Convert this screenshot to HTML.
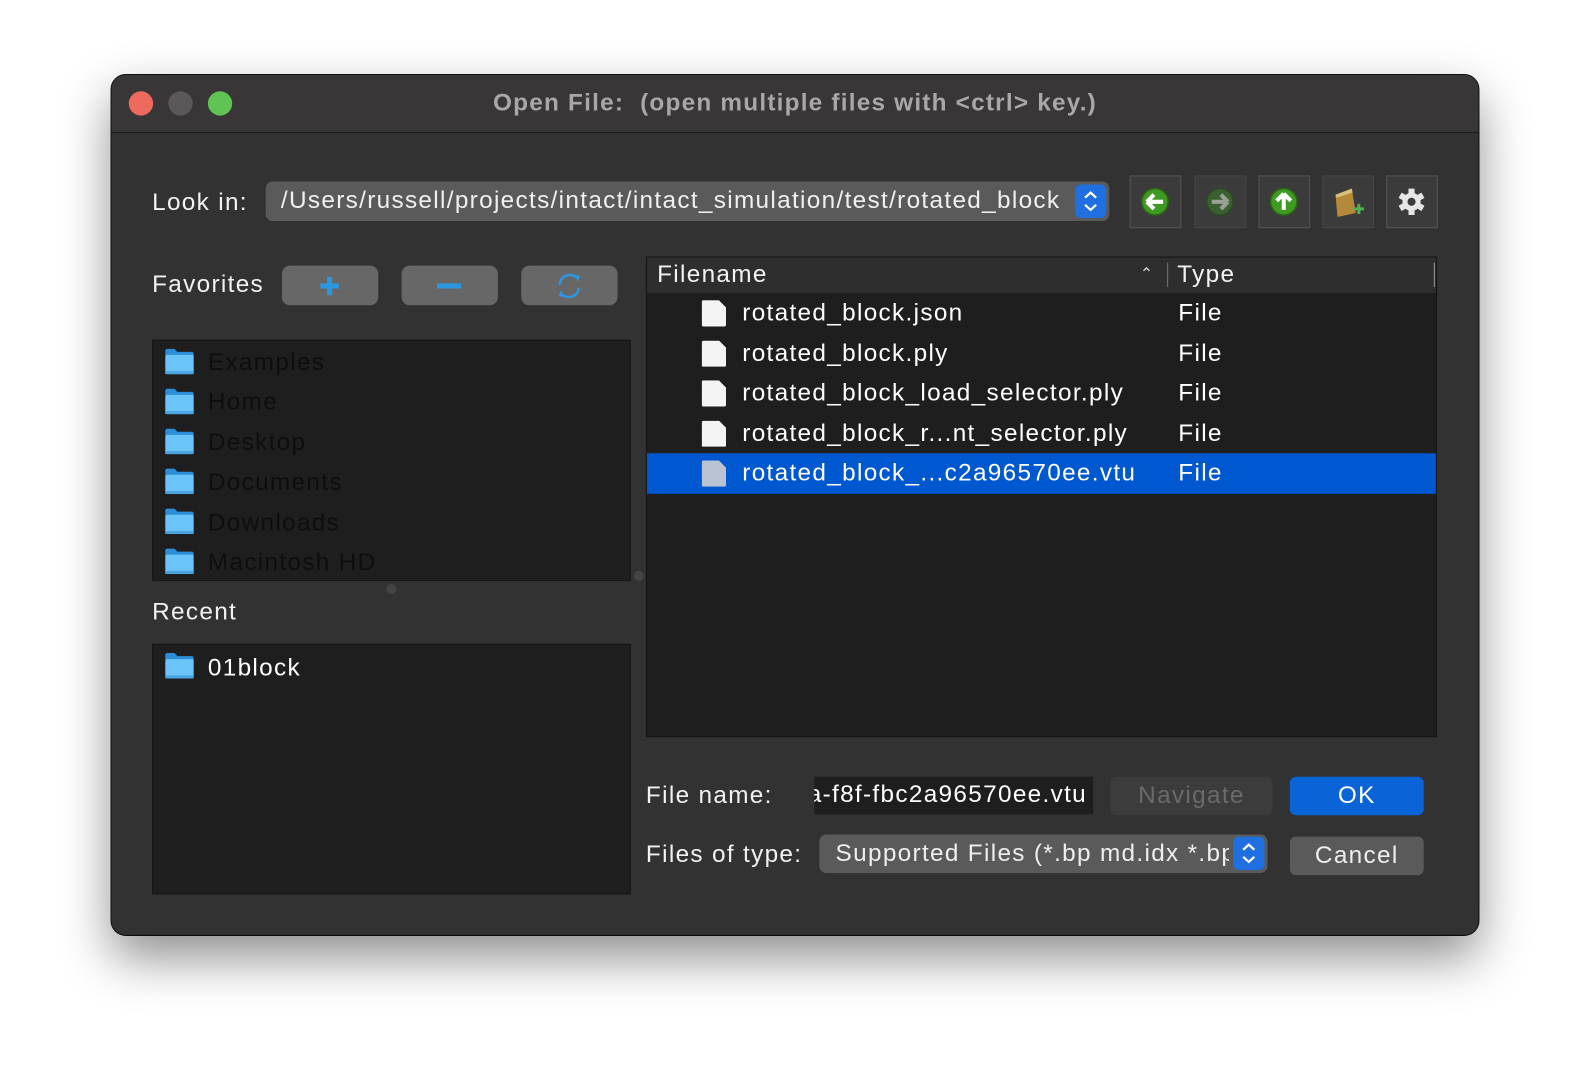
<!DOCTYPE html>
<html><head><meta charset="utf-8"><style>
*{margin:0;padding:0;box-sizing:border-box}
html,body{width:1590px;height:1084px;overflow:hidden;background:#fff}
#s{position:absolute;left:0;top:0;width:1568px;height:1069px;transform:scale(1.01403);transform-origin:0 0;font-family:"Liberation Sans",sans-serif;letter-spacing:1.3px}
.a{position:absolute}
.win{left:110px;top:74px;width:1348px;height:848px;border-radius:14px;background:#323232;box-shadow:0 22px 50px rgba(0,0,0,.45),0 0 0 1px #111;overflow:hidden}
.tb{left:0;top:0;width:1348px;height:57px;background:#383637;border-bottom:1px solid #1a1a1a}
.lbl{color:#f2f2f2;font-size:24px;line-height:28px}
.tbtn{width:51px;height:52px;background:#3b3b3b;border:1px solid #555}
.fb{width:95px;height:39px;background:#676767;border-radius:8px}
.list{background:#1e1e1e;border:1px solid #151515}
.fi{font-size:24px;line-height:39.4px;color:#0e0e0e;position:absolute;left:54px}
.row{position:absolute;left:0;width:778px;height:39.5px;font-size:24px;color:#fff;line-height:39.5px}
.row .n{position:absolute;left:94px}
.row .t{position:absolute;left:524px}
.doc{position:absolute;left:54px;top:7px;width:24px;height:26px;background:#f4f4f4;clip-path:polygon(0 0,70% 0,100% 28%,100% 100%,0 100%);border-radius:2px}
.step{position:absolute;width:31px;height:33px;background:#1f6fe0;border-radius:6px}
</style></head><body><div id="s">
<div class="a win">
 <div class="a tb"></div>
 <div class="a" style="left:17px;top:16px;width:24px;height:24px;border-radius:50%;background:#ee6a5f"></div>
 <div class="a" style="left:56px;top:16px;width:24px;height:24px;border-radius:50%;background:#5a5859"></div>
 <div class="a" style="left:95px;top:16px;width:24px;height:24px;border-radius:50%;background:#5fc452"></div>
 <div class="a" style="left:0;top:13px;width:1348px;text-align:center;font-weight:bold;font-size:24px;color:#a9a7a8;line-height:30px;letter-spacing:1.2px">Open File:&nbsp; (open multiple files with &lt;ctrl&gt; key.)</div>
</div>
<div class="a lbl" style="left:150px;top:186px">Look in:</div>
<div class="a" style="left:262px;top:179px;width:832px;height:39px;background:#5a5a5a;border-radius:7px;overflow:hidden">
 <div class="a" style="left:15px;top:5px;width:780px;white-space:nowrap;overflow:hidden;font-size:24px;color:#f0f0f0;line-height:28px">/Users/russell/projects/intact/intact_simulation/test/rotated_block</div>
 <div class="step" style="left:798px;top:3px"><svg width="31" height="33"><path d="M10 13 L15.5 8 L21 13 M10 20 L15.5 25 L21 20" stroke="#fff" stroke-width="2.2" fill="none"/></svg></div>
</div>
<div class="a tbtn" style="left:1114px;top:173px"><svg width="49" height="50"><circle cx="24" cy="25" r="13" fill="#3f9a22" stroke="#2a6a14" stroke-width="1.5"/><path d="M16 25 L23 18 M16 25 L23 32 M16 25 H32" stroke="#fff" stroke-width="4" fill="none"/></svg></div>
<div class="a tbtn" style="left:1178px;top:173px;border-color:#484848"><svg width="49" height="50"><circle cx="24" cy="25" r="13" fill="#3b6030" stroke="#2d4a24" stroke-width="1.5"/><path d="M32 25 L25 18 M32 25 L25 32 M32 25 H16" stroke="#9aa095" stroke-width="4" fill="none"/></svg></div>
<div class="a tbtn" style="left:1241px;top:173px"><svg width="49" height="50"><circle cx="24" cy="25" r="13" fill="#3f9a22" stroke="#2a6a14" stroke-width="1.5"/><path d="M24 17 L17 24 M24 17 L31 24 M24 17 V33" stroke="#fff" stroke-width="4" fill="none"/></svg></div>
<div class="a tbtn" style="left:1304px;top:173px;border-color:#484848"><svg width="49" height="50"><path d="M12 18 L28 12 L32 36 L14 40 Z" fill="#b48a3a"/><path d="M12 18 L28 12 L29 16 L13 21Z" fill="#d8c07a"/><path d="M30 32 H40 M35 27 V37" stroke="#4caf50" stroke-width="3"/></svg></div>
<div class="a tbtn" style="left:1367px;top:173px"><svg width="49" height="50"><g transform="translate(24 25)" fill="#e6e6e6"><circle r="9"/><rect x="-3" y="-13" width="6" height="26"/><rect x="-3" y="-13" width="6" height="26" transform="rotate(60)"/><rect x="-3" y="-13" width="6" height="26" transform="rotate(120)"/><circle r="4" fill="#3b3b3b"/></g></svg></div>

<div class="a lbl" style="left:150px;top:267px">Favorites</div>
<div class="a fb" style="left:278px;top:262px"><svg width="95" height="39"><path d="M47 11 V29 M38 20 H56" stroke="#2b97e0" stroke-width="5"/></svg></div>
<div class="a fb" style="left:396px;top:262px"><svg width="95" height="39"><path d="M35 20 H59" stroke="#2b97e0" stroke-width="5"/></svg></div>
<div class="a fb" style="left:514px;top:262px"><svg width="95" height="39"><path d="M38 19 A10 10 0 0 1 55 12 M57 22 A10 10 0 0 1 40 28" stroke="#2b97e0" stroke-width="2.5" fill="none"/><path d="M52 9 L58 10 L56 16Z M43 31 L37 30 L39 24Z" fill="#2b97e0"/></svg></div>

<div class="a list" style="left:150px;top:335px;width:472px;height:238px">
 <div class="fi" style="top:2px">Examples</div><div class="fi" style="top:41.4px">Home</div><div class="fi" style="top:80.8px">Desktop</div><div class="fi" style="top:120.2px">Documents</div><div class="fi" style="top:159.6px">Downloads</div><div class="fi" style="top:199px">Macintosh HD</div>
</div>
<svg class="a" style="left:162px;top:343px" width="30" height="230">
 <defs><g id="f"><path d="M1 3 Q1 1 3 1 H10 L13 4 H27 Q29 4 29 6 V8 H1Z" fill="#2c8ed6"/><rect x="1" y="7" width="28" height="19" rx="2" fill="#6ac4f8"/><rect x="1" y="23" width="28" height="3" fill="#4aa6e2"/></g></defs>
 <use href="#f" y="0"/><use href="#f" y="39.4"/><use href="#f" y="78.8"/><use href="#f" y="118.2"/><use href="#f" y="157.6"/><use href="#f" y="197"/>
</svg>
<div class="a" style="left:381px;top:576px;width:10px;height:10px;border-radius:50%;background:#444"></div>
<div class="a" style="left:625px;top:563px;width:10px;height:10px;border-radius:50%;background:#444"></div>

<div class="a lbl" style="left:150px;top:590px">Recent</div>
<div class="a list" style="left:150px;top:635px;width:472px;height:247px">
 <div class="a" style="left:54px;top:3px;font-size:24px;line-height:39px;color:#fff">01block</div>
</div>
<svg class="a" style="left:162px;top:643px" width="30" height="30"><use href="#f"/></svg>

<div class="a" style="left:637px;top:253px;width:780px;height:474px;background:#1e1e1e;border:1px solid #151515">
 <div class="a" style="left:0;top:0;width:778px;height:35px;background:#2e2e2e"></div>
 <div class="a lbl" style="left:10px;top:3px">Filename</div>
 <div class="a" style="left:486px;top:6px;color:#ddd;font-size:16px">&#8963;</div>
 <div class="a" style="left:513px;top:5px;width:1px;height:24px;background:#777"></div>
 <div class="a lbl" style="left:523px;top:3px">Type</div>
 <div class="a" style="left:776px;top:5px;width:1px;height:24px;background:#999"></div>
 <div class="row" style="top:35px"><div class="doc"></div><span class="n">rotated_block.json</span><span class="t">File</span></div>
 <div class="row" style="top:74.5px"><div class="doc"></div><span class="n">rotated_block.ply</span><span class="t">File</span></div>
 <div class="row" style="top:114px"><div class="doc"></div><span class="n">rotated_block_load_selector.ply</span><span class="t">File</span></div>
 <div class="row" style="top:153.5px"><div class="doc"></div><span class="n">rotated_block_r...nt_selector.ply</span><span class="t">File</span></div>
 <div class="row" style="top:193px;background:#0058d0"><div class="doc" style="background:#b9c3d2"></div><span class="n">rotated_block_...c2a96570ee.vtu</span><span class="t">File</span></div>
</div>

<div class="a lbl" style="left:637px;top:771px">File name:</div>
<div class="a" style="left:803px;top:766px;width:275px;height:37px;background:#1e1e1e;overflow:hidden"><div class="a" style="right:6px;top:4px;white-space:nowrap;font-size:24px;color:#fff;line-height:28px">a-f8f-fbc2a96570ee.vtu</div></div>
<div class="a" style="left:1095px;top:766px;width:160px;height:38px;background:#3c3c3c;border-radius:6px;text-align:center;color:#6a6a6a;font-size:24px;line-height:37px">Navigate</div>
<div class="a" style="left:1272px;top:766px;width:132px;height:38px;background:#0a64d8;border-radius:6px;text-align:center;color:#fff;font-size:24px;line-height:37px">OK</div>

<div class="a lbl" style="left:637px;top:829px">Files of type:</div>
<div class="a" style="left:808px;top:823px;width:442px;height:38px;background:#5a5a5a;border-radius:7px;overflow:hidden">
 <div class="a" style="left:16px;top:5px;width:388px;white-space:nowrap;overflow:hidden;font-size:24px;color:#eee;line-height:28px">Supported Files (*.bp md.idx *.bp</div>
 <div class="step" style="left:408px;top:2px"><svg width="31" height="33"><path d="M10 13 L15.5 8 L21 13 M10 20 L15.5 25 L21 20" stroke="#fff" stroke-width="2.2" fill="none"/></svg></div>
</div>
<div class="a" style="left:1272px;top:825px;width:132px;height:38px;background:#5a5a5a;border-radius:6px;text-align:center;color:#eee;font-size:24px;line-height:37px">Cancel</div>
</div></body></html>
